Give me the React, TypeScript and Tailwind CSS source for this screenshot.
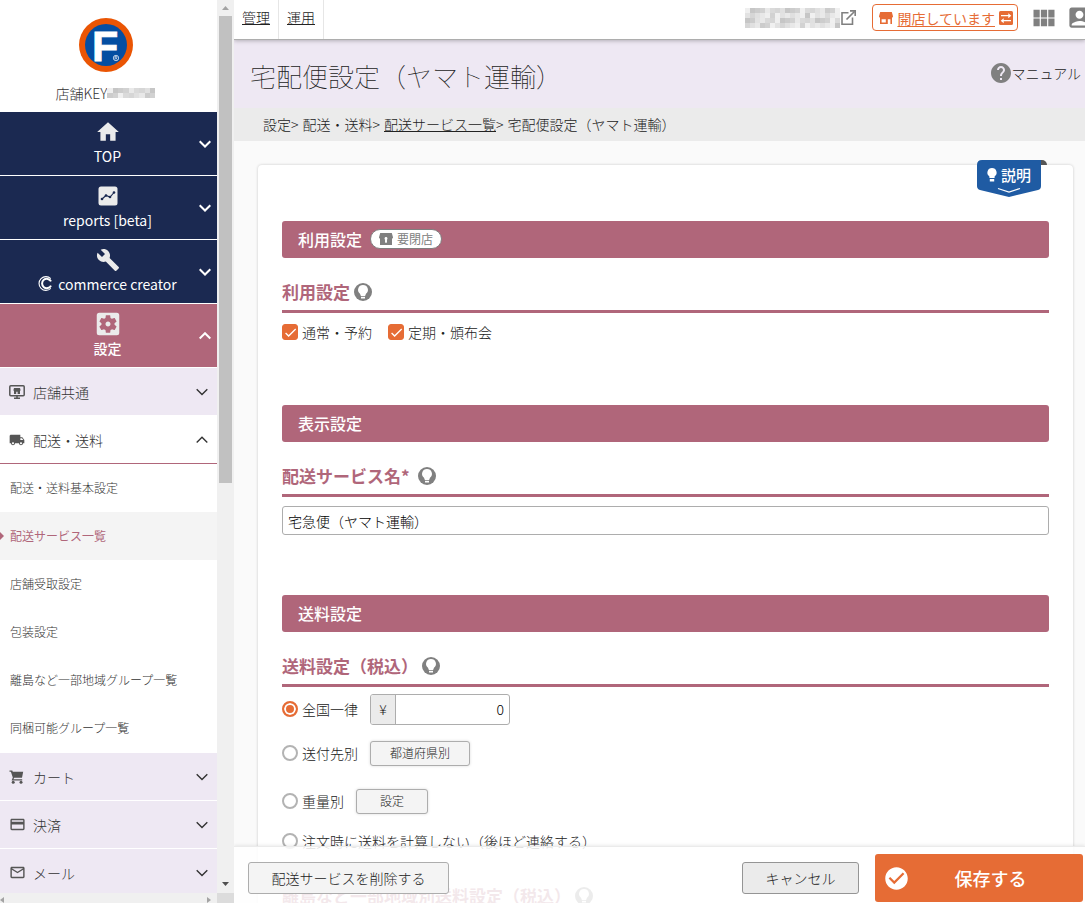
import React from "react";
import {
  MdAccountBox,
  MdBuild,
  MdCheck,
  MdCheckCircle,
  MdCreditCard,
  MdHelp,
  MdHome,
  MdLocalShipping,
  MdMailOutline,
  MdSettingsApplications,
  MdViewModule,
} from "react-icons/md";

function Chevron({ up = false, bold = false }: { up?: boolean; bold?: boolean }) {
  return (
    <svg width="12" height="8" viewBox="0 0 12 8" fill="none" stroke="currentColor" strokeWidth={bold ? 2 : 1.4} aria-hidden="true">
      <path d={up ? "M.7 6.5 6 1.2 11.3 6.5" : "M.7 1.2 6 6.5 11.3 1.2"} />
    </svg>
  );
}

function BrandLogo() {
  return (
    <svg width="54" height="54" viewBox="0 0 54 54" className="shrink-0" aria-hidden="true">
      <circle cx="27" cy="27" r="27" fill="#ea5504" />
      <circle cx="27" cy="27" r="21" fill="#034ea2" />
      <text x="13" y="42.5" fontFamily="Liberation Sans, sans-serif" fontSize="43" fontWeight="700" fill="#fff" stroke="#fff" strokeWidth=".8">
        F
      </text>
      <circle cx="37" cy="40" r="2.7" fill="none" stroke="#fff" strokeWidth=".7" />
      <path d="M36 41.6v-3.2h1.2a.8.8 0 0 1 0 1.6H36m1.2 0 .9 1.6" fill="none" stroke="#fff" strokeWidth=".6" />
    </svg>
  );
}

function ReportIcon() {
  return (
    <svg width="20" height="20" viewBox="0 0 20 20" aria-hidden="true">
      <rect x=".5" y=".5" width="19" height="19" rx="2.5" fill="#ebebeb" />
      <path d="m4 13 4-3.5 4 1.5 4-4.5" fill="none" stroke="#1b2951" strokeWidth="1.1" />
      <g fill="#1b2951">
        <circle cx="4" cy="13" r="1.3" />
        <circle cx="8" cy="9.5" r="1.3" />
        <circle cx="12" cy="11" r="1.3" />
        <circle cx="16" cy="6.5" r="1.3" />
      </g>
    </svg>
  );
}

function CreatorMark() {
  return (
    <svg width="14" height="15" viewBox="0 0 14 15" fill="none" stroke="currentColor" aria-hidden="true">
      <path d="M12.800 2.600A6.900 6.900 0 1 0 12.800 12.400" strokeWidth="1.100" />
      <path d="M13 5.400A4.700 4.700 0 1 0 13 9.600" strokeWidth="2" />
    </svg>
  );
}

function MonitorStoreIcon() {
  return (
    <svg width="16" height="14" viewBox="0 0 16 14" aria-hidden="true">
      <rect x=".8" y=".8" width="14.4" height="9.9" rx="1" fill="none" stroke="currentColor" strokeWidth="1.5" />
      <path d="M5 13.3h6M8 11v2" stroke="currentColor" strokeWidth="1.6" />
      <path d="M5 3h6l.6 2.200-.6.700V9H8.600V6.800H7.200V9H5V5.900l-.6-.7z" fill="currentColor" />
    </svg>
  );
}

function CartIcon() {
  return (
    <svg width="16" height="14" viewBox="0 0 16 14" fill="currentColor" aria-hidden="true">
      <path d="M.5.5h2.800l.5 1.200h10.400L13 7.800H5.200l-.8 1.400h8.800v1.400H2.600l1.200-3L1.900 1.700H.5z" />
      <circle cx="4.200" cy="12.200" r="1.500" />
      <circle cx="12" cy="12.200" r="1.500" />
    </svg>
  );
}

function StoreIcon({ closed = false }: { closed?: boolean }) {
  return (
    <svg width="14" height="12" viewBox="0 0 14 12" fill="currentColor" aria-hidden="true">
      <path d="M1.200 0h11.600L14 4.200c0 .8-.5 1.300-1.200 1.500H1.200C.5 5.500 0 5 0 4.200z" />
      {closed ? (
        <path fillRule="evenodd" d="M1 5h12v7H1zM7 3.800a1.500 1.500 0 0 0-.8 2.800V9.500h1.600V6.600A1.500 1.500 0 0 0 7 3.800z" />
      ) : (
        <path fillRule="evenodd" d="M1 5h12v7h-1.600V7.200H8.800V12H1zM2.600 7.200v3.200h4.200V7.200z" />
      )}
      {closed && <path d="M6.200 6h1.600v3.500H6.200zM7 4a1.400 1.400 0 1 1 0 2.800A1.400 1.400 0 0 1 7 4z" fill="#fff" />}
    </svg>
  );
}

function SwapIcon() {
  return (
    <svg width="14" height="14" viewBox="0 0 14 14" aria-hidden="true">
      <rect width="14" height="14" rx="1.500" fill="currentColor" />
      <path d="M2 4.700h8M4 9.700h8" stroke="#fff" strokeWidth="1.300" />
      <path d="m9.300 2.200 3 2.500-3 2.500zM4.700 7.200l-3 2.500 3 2.500z" fill="#fff" />
    </svg>
  );
}

function ExternalIcon() {
  return (
    <svg width="15" height="15" viewBox="0 0 15 15" fill="none" stroke="currentColor" aria-hidden="true">
      <path d="M7.500 2.800H1v11.400h10.500V7.500" strokeWidth="1.600" />
      <path d="M5.500 9.500 13.500 1.500" strokeWidth="1.700" />
      <path d="M9 .9h5.200V6" strokeWidth="1.600" />
    </svg>
  );
}

function HintButton({ label }: { label: string }) {
  return (
    <button type="button" aria-label={label} className="text-[#808080]">
      <svg width="18" height="18" viewBox="0 0 18 18" aria-hidden="true">
        <circle cx="9" cy="9" r="9" fill="currentColor" />
        <path d="M9 2a4.900 4.900 0 0 0-3 8.800l.9 2.200h4.200l.9-2.200A4.900 4.900 0 0 0 9 2z" fill="#fff" />
        <path d="M7 13.800h4v1.700H7z" fill="#fff" />
      </svg>
    </button>
  );
}

const blurTones = [
  "bg-[#efefef]", "bg-[#d6d6d6]", "bg-[#e2e2e2]", "bg-[#cccccc]", "bg-[#e8e8e8]", "bg-[#dadada]",
  "bg-[#f0f0f0]", "bg-[#c6c6c6]", "bg-[#e0e0e0]", "bg-[#e9e9e9]", "bg-[#d2d2d2]",
];

function Mosaic({ count, className }: { count: number; className: string }) {
  return (
    <span aria-hidden="true" className={`grid auto-rows-[5px] ${className}`}>
      {Array.from({ length: count }, (_, i) => (
        <span key={i} className={blurTones[(i * 7 + (i >> 2) * 3) % blurTones.length]} />
      ))}
    </span>
  );
}

const mainMenu = [
  { label: "TOP", icon: <MdHome size={26} />, open: false, mark: false },
  { label: "reports [beta]", icon: <ReportIcon />, open: false, mark: false },
  { label: "commerce creator", icon: <MdBuild size={24} />, open: false, mark: true },
  { label: "設定", icon: <MdSettingsApplications size={30} />, open: true, mark: false },
];

const deliveryLinks = [
  "配送・送料基本設定",
  "配送サービス一覧",
  "店舗受取設定",
  "包装設定",
  "離島など一部地域グループ一覧",
  "同梱可能グループ一覧",
];

function Category({ label, icon, open = false }: { label: string; icon: React.ReactNode; open?: boolean }) {
  return (
    <button
      type="button"
      aria-expanded={open}
      className={`flex h-12 w-full shrink-0 items-center border-b px-[9px] text-left text-sm font-light text-[#333] ${
        open ? "border-[#b0667a] bg-white" : "border-white bg-[#eee8f3]"
      }`}
    >
      <span className="flex w-6 text-[#555]">{icon}</span>
      <span className="flex-1">{label}</span>
      <Chevron up={open} />
    </button>
  );
}

function Sidebar() {
  return (
    <aside className="flex w-[217px] shrink-0 flex-col bg-white">
      <div className="flex h-28 shrink-0 flex-col items-center pt-[18px] pr-1.5">
        <BrandLogo />
        <div className="mt-[11px] flex items-center text-sm leading-5 font-light text-[#333]">
          店舗KEY
          <Mosaic count={18} className="w-12 grid-cols-9" />
        </div>
      </div>
      <nav className="flex min-h-0 flex-1 flex-col overflow-hidden">
        {mainMenu.map((m) => (
          <button
            key={m.label}
            type="button"
            aria-expanded={m.open}
            className={`flex h-16 w-full shrink-0 items-center border-b border-white pr-1.5 text-sm text-white ${
              m.open ? "bg-[#b0667a] font-medium" : "bg-[#1b2951]"
            }`}
          >
            <span className="flex flex-1 flex-col items-center pb-0.5 pl-4">
              <span className="flex h-6 items-center justify-center text-[#ebebeb]">{m.icon}</span>
              <span className="mt-0.5 flex items-center gap-1.5 leading-5">
                {m.mark && <CreatorMark />}
                {m.label}
              </span>
            </span>
            <Chevron up={m.open} bold />
          </button>
        ))}
        <Category label="店舗共通" icon={<MonitorStoreIcon />} />
        <Category label="配送・送料" icon={<MdLocalShipping size={16} />} open />
        <ul className="shrink-0 pb-px">
          {deliveryLinks.map((label, i) => (
            <li
              key={label}
              className={i === 1 ? "flex items-center bg-[#f4f4f4] font-normal text-[#b0667a]" : "flex items-center font-light text-[#333]"}
            >
              <span className="w-2.5">
                {i === 1 && (
                  <svg width="4" height="8" viewBox="0 0 4 8" fill="currentColor" aria-hidden="true">
                    <path d="M0 0 4 4 0 8z" />
                  </svg>
                )}
              </span>
              <a href="#" className="flex h-12 items-center text-xs">
                {label}
              </a>
            </li>
          ))}
        </ul>
        <Category label="カート" icon={<CartIcon />} />
        <Category label="決済" icon={<MdCreditCard size={17} />} />
        <Category label="メール" icon={<MdMailOutline size={17} />} />
      </nav>
      <div className="flex h-2.5 shrink-0 items-end justify-between bg-[#f0f0f0] pr-1.5 text-[#a3a3a3]">
        <svg width="4" height="6" viewBox="0 0 4 6" fill="currentColor" aria-hidden="true"><path d="M4 0v6L0 3z" /></svg>
        <svg width="4" height="6" viewBox="0 0 4 6" fill="currentColor" aria-hidden="true"><path d="M0 0v6l4-3z" /></svg>
      </div>
    </aside>
  );
}

function ScrollTrack() {
  return (
    <div aria-hidden="true" className="flex w-[17px] shrink-0 flex-col items-center bg-[#f0f0f0]">
      <svg width="17" height="16" viewBox="0 0 17 16"><path d="M5 10h7L8.500 6z" fill="#a3a3a3" /></svg>
      <div className="h-[467px] w-[13px] bg-[#c1c1c1]" />
      <div className="flex-1" />
      <svg width="17" height="17" viewBox="0 0 17 17"><path d="M5 6h7l-3.500 4z" fill="#505050" /></svg>
      <div className="h-2.5 w-full shrink-0 bg-[#dcdcdc]" />
    </div>
  );
}

function TopBar() {
  return (
    <header className="relative z-10 flex h-10 shrink-0 items-center overflow-visible border-b border-[#adadad] bg-white shadow-[0_1px_4px_rgba(0,0,0,0.25)]">
      <nav className="flex h-full text-sm font-light text-[#222]">
        <a href="#" className="flex w-[45px] justify-center border-r border-[#e6e6e6] pt-[7px] underline">管理</a>
        <a href="#" className="flex w-[45px] justify-center border-r border-[#e6e6e6] pt-[7px] underline">運用</a>
      </nav>
      <div className="flex flex-1 items-center justify-end overflow-hidden pb-1">
        <a href="#" aria-label="店舗ページ" className="flex items-center gap-px text-[#808080]">
          <Mosaic count={76} className="w-[95px] grid-cols-[repeat(19,minmax(0,1fr))]" />
          <ExternalIcon />
        </a>
        <button type="button" className="ml-4 flex h-[27px] items-center gap-1 rounded border border-[#e66c35] pr-1 pl-1.5 text-sm text-[#e66c35]">
          <StoreIcon />
          <span className="underline underline-offset-2">開店しています</span>
          <SwapIcon />
        </button>
        <button type="button" aria-label="アプリ一覧" className="ml-3 text-[#808080]"><MdViewModule size={28} /></button>
        <button type="button" aria-label="アカウント" className="-mr-2 ml-2 text-[#808080]"><MdAccountBox size={27} /></button>
      </div>
    </header>
  );
}

function Bar({ children }: { children: React.ReactNode }) {
  return (
    <h2 className="flex h-[37px] items-center gap-2 rounded-[3px] bg-[#b0667a] px-4 pb-0.5 text-base font-medium text-white">{children}</h2>
  );
}

function SubHeading({ title, wide = false }: { title: string; wide?: boolean }) {
  return (
    <div className={`flex h-[55px] items-center border-b-[3px] border-[#b0667a] pt-4 ${wide ? "gap-2" : "gap-1"}`}>
      <h3 className="text-[17px] leading-6 font-bold text-[#b0667a]">{title}</h3>
      <HintButton label={`${title}の説明`} />
    </div>
  );
}

function CheckOption({ label }: { label: string }) {
  return (
    <label className="flex items-center gap-1 text-sm font-light text-[#222]">
      <span className="grid size-4 place-items-center text-white">
        <input type="checkbox" defaultChecked className="col-start-1 row-start-1 size-4 appearance-none rounded-[3px] border border-[#adadad] checked:border-[#e66c35] checked:bg-[#e66c35]" />
        <MdCheck size={15} className="pointer-events-none col-start-1 row-start-1" />
      </span>
      {label}
    </label>
  );
}

function RadioOption({ label, checked = false }: { label: string; checked?: boolean }) {
  return (
    <label className="flex items-center gap-1 text-sm font-light text-[#222]">
      <input
        type="radio"
        name="shipping-fee"
        defaultChecked={checked}
        className="size-4 appearance-none rounded-full border-2 border-[#b3b3b3] checked:border-[#e66c35] checked:bg-[#e66c35] checked:shadow-[inset_0_0_0_2px_white]"
      />
      {label}
    </label>
  );
}

const smallButton =
  "flex h-[25px] items-center justify-center rounded-[3px] border border-[#adadad] bg-[#f4f4f4] text-xs font-light text-[#222] shadow-[0_0_3px_rgba(0,0,0,0.15)]";

function SettingsCard() {
  return (
    <section className="relative mr-3 ml-6 rounded bg-white px-6 pt-14 shadow-[0_0_3px_rgba(0,0,0,0.2)]">
      <div className="absolute -top-[5px] right-[26px] flex items-start">
        <button type="button" className="relative flex h-[38px] w-16 items-start text-white">
          <svg width="64" height="38" viewBox="0 0 64 38" className="absolute inset-0" aria-hidden="true">
            <path d="M5 0h59v26q0 3-3 4L32 37 3 30q-3-1-3-4V5q0-5 5-5z" fill="#1f5ba3" />
            <path d="m21 28.500 11 3.500 11-3.500" fill="none" stroke="#fff" strokeWidth="1.300" />
            <path d="M15 8a4.600 4.600 0 0 0-2.600 8.400V18h5.200v-1.600A4.600 4.600 0 0 0 15 8zM12.800 19h4.400v2.500h-4.400z" fill="#fff" />
          </svg>
          <span className="relative flex h-[30px] items-center pl-6 text-[15px] font-medium">説明</span>
        </button>
        <span className="h-[5px] w-1.5 rounded-tr-[5px] bg-[#555]" />
      </div>

      <div className="min-h-[184px]">
        <Bar>
          利用設定
          <span className="flex h-5 items-center gap-1 rounded-full border border-[#808080] bg-white px-2 text-xs font-normal text-[#808080]">
            <StoreIcon closed />
            要閉店
          </span>
        </Bar>
        <SubHeading title="利用設定" />
        <div className="flex gap-4 pt-[9px]">
          <CheckOption label="通常・予約" />
          <CheckOption label="定期・頒布会" />
        </div>
      </div>

      <div className="min-h-[190px]">
        <Bar>表示設定</Bar>
        <SubHeading title="配送サービス名*" wide />
        <input
          type="text"
          aria-label="配送サービス名"
          defaultValue="宅急便（ヤマト運輸）"
          className="mt-[9px] block h-[29px] w-full rounded-[3px] border border-[#adadad] px-[5px] text-sm font-light text-black"
        />
      </div>

      <div>
        <Bar>送料設定</Bar>
        <SubHeading title="送料設定（税込）" />
        <div className="flex h-11 items-center gap-3">
          <RadioOption label="全国一律" checked />
          <label className="flex h-[31px] w-[140px] overflow-hidden rounded-[3px] border border-[#adadad]">
            <span className="flex w-[25px] shrink-0 items-center justify-center border-r border-[#adadad] bg-[#ebebeb] text-sm font-light text-[#222]">¥</span>
            <input type="text" aria-label="全国一律送料" defaultValue="0" className="w-full min-w-0 px-[5px] text-right text-sm font-light text-black" />
          </label>
        </div>
        <div className="flex h-11 items-center gap-3">
          <RadioOption label="送付先別" />
          <button type="button" className={`${smallButton} w-[100px]`}>都道府県別</button>
        </div>
        <div className="flex h-12 items-center gap-3 pt-1">
          <RadioOption label="重量別" />
          <button type="button" className={`${smallButton} w-[72px]`}>設定</button>
        </div>
        <div className="flex h-9 items-center">
          <RadioOption label="注文時に送料を計算しない（後ほど連絡する）" />
        </div>
        <div className="mt-[3px]">
          <SubHeading title="離島など一部地域別送料設定（税込）" />
        </div>
      </div>
    </section>
  );
}

function ActionBar() {
  return (
    <footer className="absolute inset-x-0 bottom-0 z-10 flex h-[57px] items-center border-t border-[#ebebeb] bg-white/85 pr-0.5 pl-3.5 shadow-[0_-1px_3px_rgba(0,0,0,0.08)]">
      <button type="button" className="mt-1.5 h-8 w-[201px] rounded-[3px] border border-[#adadad] bg-[#f4f4f4] text-sm font-light text-[#222]">
        配送サービスを削除する
      </button>
      <div className="flex-1" />
      <button type="button" className="mt-1.5 h-8 w-[117px] rounded-[3px] border border-[#959595] bg-[#ebebeb] text-sm font-light text-[#222]">
        キャンセル
      </button>
      <button type="button" className="mt-1.5 ml-4 flex h-12 w-52 items-center rounded-[3px] bg-[#e66c35] pl-2 text-lg font-medium text-white">
        <MdCheckCircle size={27} />
        <span className="flex-1 pr-7 pl-4 text-center">保存する</span>
      </button>
    </footer>
  );
}

export default function App() {
  return (
    <div className="flex h-screen overflow-hidden bg-[#fafafa] font-['Noto_Sans_CJK_JP',sans-serif] text-[#222]">
      <Sidebar />
      <ScrollTrack />
      <main className="relative flex min-w-0 flex-1 flex-col overflow-hidden">
        <TopBar />
        <div className="flex h-[68px] shrink-0 items-center justify-between bg-[#eee8f3] pr-1 pb-0.5 pl-4">
          <h1 className="pt-1 text-[26px] font-thin text-[#222]">宅配便設定（ヤマト運輸）</h1>
          <a href="#" className="flex items-center text-sm font-light text-[#222]">
            <MdHelp size={24} className="-mr-0.5 text-[#808080]" />
            マニュアル
          </a>
        </div>
        <nav aria-label="パンくず" className="flex h-[33px] shrink-0 items-center gap-1 bg-[#ebebeb] pb-0.5 pl-[29px] text-sm font-light text-[#222]">
          <span>設定&gt;</span>
          <span>配送・送料&gt;</span>
          <span>
            <a href="#" className="underline">配送サービス一覧</a>&gt;
          </span>
          <span>宅配便設定（ヤマト運輸）</span>
        </nav>
        <div className="min-h-0 flex-1 overflow-hidden pt-6">
          <SettingsCard />
        </div>
        <ActionBar />
      </main>
    </div>
  );
}
